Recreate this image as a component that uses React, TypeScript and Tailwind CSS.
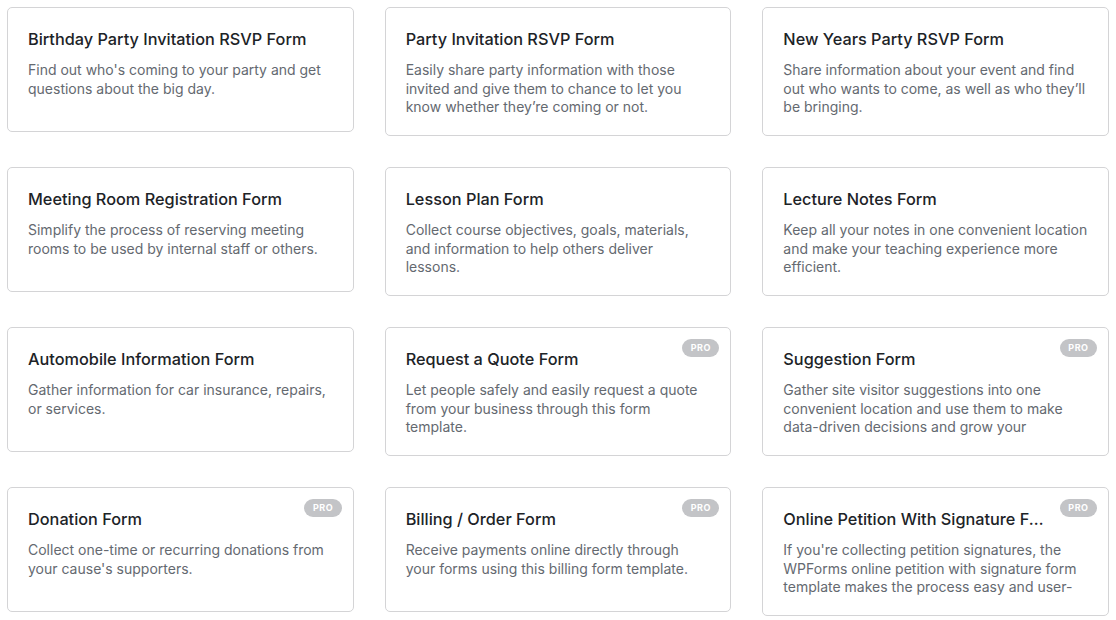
const templates = [
  {
    title: "Birthday Party Invitation RSVP Form",
    desc: "Find out who's coming to your party and get questions about the big day.",
  },
  {
    title: "Party Invitation RSVP Form",
    desc: "Easily share party information with those invited and give them to chance to let you know whether they’re coming or not.",
  },
  {
    title: "New Years Party RSVP Form",
    desc: "Share information about your event and find out who wants to come, as well as who they’ll be bringing.",
  },
  {
    title: "Meeting Room Registration Form",
    desc: "Simplify the process of reserving meeting rooms to be used by internal staff or others.",
  },
  {
    title: "Lesson Plan Form",
    desc: "Collect course objectives, goals, materials, and information to help others deliver lessons.",
  },
  {
    title: "Lecture Notes Form",
    desc: "Keep all your notes in one convenient location and make your teaching experience more efficient.",
  },
  {
    title: "Automobile Information Form",
    desc: "Gather information for car insurance, repairs, or services.",
  },
  {
    title: "Request a Quote Form",
    desc: "Let people safely and easily request a quote from your business through this form template.",
    pro: true,
  },
  {
    title: "Suggestion Form",
    desc: "Gather site visitor suggestions into one convenient location and use them to make data-driven decisions and grow your",
    pro: true,
  },
  {
    title: "Donation Form",
    desc: "Collect one-time or recurring donations from your cause's supporters.",
    pro: true,
  },
  {
    title: "Billing / Order Form",
    desc: "Receive payments online directly through your forms using this billing form template.",
    pro: true,
  },
  {
    title: "Online Petition With Signature Form",
    desc: "If you're collecting petition signatures, the WPForms online petition with signature form template makes the process easy and user-",
    pro: true,
  },
];

const App = () => {
  return (
    <main
      className="min-h-[620px] bg-white px-[7px] pt-[7px]"
      style={{ fontFamily: "Inter, 'Noto Sans', sans-serif" }}
    >
      <div className="grid grid-cols-3 gap-[31px] items-start">
        {templates.map((t) => (
          <div
            key={t.title}
            className="relative min-h-[125px] rounded-[5px] border border-[#d4d4d6] bg-white px-5 pt-[19px] pb-[18.5px]"
          >
            {t.pro && (
              <span className="absolute right-[11px] top-[10.5px] rounded-full bg-[#c3c4c7] px-[8.5px] py-[3.5px] text-[9px] font-bold leading-[11px] tracking-[0.5px] text-white">
                PRO
              </span>
            )}
            <h3
              className={
                "truncate text-[16.3px] font-medium leading-[24px] text-[#1d2327] " +
                (t.pro ? "pr-[42px]" : "")
              }
            >
              {t.title}
            </h3>
            <p className="mt-[10px] text-[14px] leading-[18.5px] text-[#646970]">
              {t.desc}
            </p>
          </div>
        ))}
      </div>
    </main>
  );
};

export default App;
